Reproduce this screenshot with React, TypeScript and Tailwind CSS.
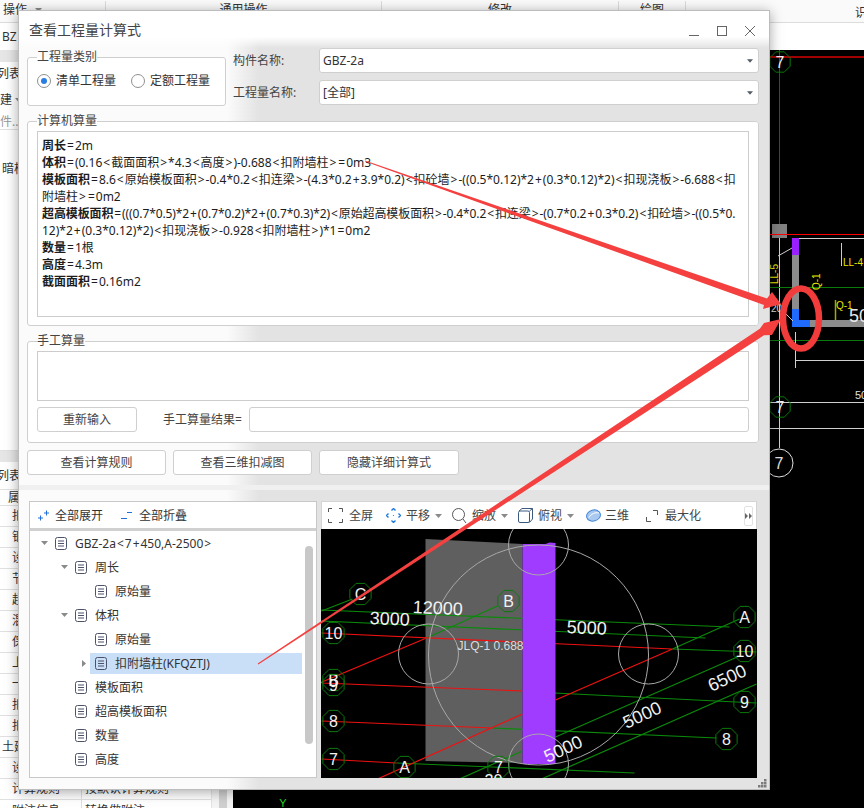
import React from "react";

const FONT = "[font-family:'Noto_Sans','Noto_Sans_CJK_SC',sans-serif]";

const calcLines = [
  { label: "周长", text: "=2m", cls: "" },
  { label: "体积", text: "=(0.16<截面面积>*4.3<高度>)-0.688<扣附墙柱>=0m3", cls: "" },
  {
    label: "模板面积",
    text: "=8.6<原始模板面积>-0.4*0.2<扣连梁>-(4.3*0.2+3.9*0.2)<扣砼墙>-((0.5*0.12)*2+(0.3*0.12)*2)<扣现浇板>-6.688<扣",
    cls: "",
  },
  { label: "", text: "附墙柱>=0m2", cls: "" },
  {
    label: "超高模板面积",
    text: "=(((0.7*0.5)*2+(0.7*0.2)*2+(0.7*0.3)*2)<原始超高模板面积>-0.4*0.2<扣连梁>-(0.7*0.2+0.3*0.2)<扣砼墙>-((0.5*0.",
    cls: "tracking-[-0.11px]",
  },
  { label: "", text: "12)*2+(0.3*0.12)*2)<扣现浇板>-0.928<扣附墙柱>)*1=0m2", cls: "" },
  { label: "数量", text: "=1根", cls: "" },
  { label: "高度", text: "=4.3m", cls: "" },
  { label: "截面面积", text: "=0.16m2", cls: "" },
];

const treeRows = [
  { name: "GBZ-2a<7+450,A-2500>", pad: "pl-[8px]", caret: "down" },
  { name: "周长", pad: "pl-[28px]", caret: "down" },
  { name: "原始量", pad: "pl-[48px]", caret: "" },
  { name: "体积", pad: "pl-[28px]", caret: "down" },
  { name: "原始量", pad: "pl-[48px]", caret: "" },
  { name: "扣附墙柱(KFQZTJ)", pad: "pl-[48px]", caret: "right", selected: true },
  { name: "模板面积", pad: "pl-[28px]", caret: "" },
  { name: "超高模板面积", pad: "pl-[28px]", caret: "" },
  { name: "数量", pad: "pl-[28px]", caret: "" },
  { name: "高度", pad: "pl-[28px]", caret: "" },
  { name: "截面面积", pad: "pl-[28px]", caret: "" },
];

const sideRows = ["扣", "钢", "设", "节", "超", "混", "保", "上", "一", "扣", "扣", "土建", "设"];

// the operators sit wider in the original font than in Noto Sans
function Formula({ text }: { text: string }) {
  return (
    <>
      {text.split(/([<>=+])/).map((part, i) =>
        /^[<>=+]$/.test(part) ? (
          <span key={i} className="mx-[1px]">
            {part}
          </span>
        ) : (
          part
        ),
      )}
    </>
  );
}

function Caret({ dark }: { dark?: boolean }) {
  return (
    <svg width={dark ? 6 : 7} height="4" viewBox="0 0 7 4" className="shrink-0">
      <path d="M0 0h7L3.5 4z" fill={dark ? "#555a66" : "#8a8a8a"} />
    </svg>
  );
}

function DocIcon() {
  return (
    <svg width="12" height="13" viewBox="0 0 12 13" className="shrink-0" fill="none" stroke="#4c5268">
      <rect x="0.5" y="0.5" width="11" height="12" rx="2" />
      <path d="M3 4h6M3 6.5h6M3 9h6" />
    </svg>
  );
}

function Field({ label, value }: { label: string; value: string }) {
  return (
    <div className="flex h-[25px] items-center">
      <span className="w-[86px] pt-[1px] text-[12px] text-[#444]">{label}</span>
      <div className="flex h-full flex-1 items-center justify-between rounded-[3px] border border-[#cfcfcf] bg-white pl-[3px] pr-[5px] pt-[1px] text-[12px] text-[#333]">
        <span>{value}</span>
        <Caret dark />
      </div>
    </div>
  );
}

function Radio({ label, checked }: { label: string; checked?: boolean }) {
  return (
    <div className="flex items-center gap-[5px] text-[12px] text-[#333]">
      <span className="flex h-[14px] w-[14px] items-center justify-center rounded-full border border-[#8f8f8f] bg-white">
        {checked && <span className="h-[6px] w-[6px] rounded-full bg-[#2a7de1]" />}
      </span>
      {label}
    </div>
  );
}

function ActionButton({ label, width }: { label: string; width: string }) {
  return (
    <button className={`h-[25px] rounded-[3px] border border-[#cfcfcf] bg-white text-[12px] text-[#444] ${width}`}>
      {label}
    </button>
  );
}

function Octagon({ x, y, label, r = 11.5 }: { x: number; y: number; label: string; r?: number }) {
  const pts = Array.from({ length: 8 }, (_, i) => {
    const a = (Math.PI / 4) * i + Math.PI / 8;
    return `${x + r * Math.cos(a)},${y + r * Math.sin(a)}`;
  }).join(" ");
  return (
    <g>
      <polygon points={pts} fill="none" stroke="#0b7a0b" strokeWidth="1" />
      <text x={x} y={y + 6} textAnchor="middle" fontSize="16" fill="#f2f2f2" fontFamily="'Liberation Sans',sans-serif">
        {label}
      </text>
    </g>
  );
}

function ThreeDView() {
  const green = "#0a8a0a";
  const red = "#f01010";
  const text = "'Liberation Sans',sans-serif";
  return (
    <svg viewBox="322 528 435 249" className="block h-[249px] w-full bg-black">
      <polygon points="426,538 523,543 523,762 426,760" fill="#5f5f5f" />
      <g fill="none" strokeWidth="1.2">
        <path d="M322 609L730 626M322 620L706 637M673 648L757 651M555 692L757 702M493 727L717 737M397 762L635 772" stroke={green} />
        <path d="M322 610L353 598M427 637L498 605M460 778L523 750M740 618L673 648M740 655L556 736M542 778L757 683" stroke={green} />
        <path d="M322 632L673 648M322 682L523 690M322 720L493 727M322 758L397 762M320 682L427 637M556 699L673 648M378 778L523 713" stroke={red} />
      </g>
      <path d="M523 543L546 543L550 541.5L556 542V763L523 763z" fill="#a03cff" />
      <g fill="none" stroke="#a8a8a8" strokeWidth="1">
        <circle cx="539" cy="654" r="110" />
        <circle cx="539" cy="544" r="30" />
        <circle cx="429" cy="653" r="30" />
        <circle cx="649" cy="653" r="30" />
        <circle cx="539" cy="763" r="30" />
      </g>
      <Octagon x={361} y={593} label="C" />
      <Octagon x={509} y={600} label="B" />
      <Octagon x={745} y={616} label="A" />
      <Octagon x={334} y={632} label="10" />
      <Octagon x={745} y={650} label="10" />
      <Octagon x={334} y={679} label="B" />
      <Octagon x={334} y={684} label="9" />
      <Octagon x={745} y={701} label="9" />
      <Octagon x={334} y={720} label="8" />
      <Octagon x={727} y={738} label="8" />
      <Octagon x={334} y={758} label="7" />
      <Octagon x={405} y={766} label="A" />
      <Octagon x={499} y={766} label="7" />
      <g fill="#f2f2f2" fontSize="18" fontFamily={text}>
        <text x="413" y="612" transform="rotate(2.5 413 612)">12000</text>
        <text x="370" y="623" transform="rotate(2.5 370 623)">3000</text>
        <text x="567" y="632" transform="rotate(2.5 567 632)">5000</text>
        <text x="712" y="691" transform="rotate(-25 712 691)">6500</text>
        <text x="627" y="728" transform="rotate(-25 627 728)">5000</text>
        <text x="548" y="762" transform="rotate(-25 548 762)">5000</text>
        <text x="485" y="785" fontSize="16">20</text>
      </g>
      <text x="458" y="649" fontSize="12" fill="#dddddd" fontFamily={text}>JLQ-1 0.688</text>
    </svg>
  );
}

function TopCad() {
  const text = "'Liberation Sans',sans-serif";
  return (
    <svg viewBox="233 50 631 758" className="block h-[758px] w-[631px]">
      <path d="M770 57H864" stroke="#a00000" strokeWidth="2" />
      <path d="M779.5 50V234" stroke="#c01010" strokeWidth="1" />
      <rect x="772" y="224" width="15" height="14" fill="#808080" />
      <path d="M770 234.5H864" stroke="#ff0000" strokeWidth="1" />
      <path d="M779.5 238V448" stroke="#d0d0d0" strokeWidth="1" />
      <path d="M792 238.5H864" stroke="#d0d0d0" strokeWidth="1" />
      <path d="M770 287.5H864M770 340.5H864" stroke="#0a7a0a" strokeWidth="1" />
      <rect x="792" y="238" width="7" height="89" fill="#8c8c8c" />
      <rect x="799" y="320" width="65" height="7" fill="#8c8c8c" />
      <rect x="792" y="238" width="7" height="17" fill="#9a20ff" />
      <rect x="792" y="309" width="7" height="18" fill="#1f6bff" />
      <rect x="792" y="320" width="18" height="7" fill="#1f6bff" />
      <path d="M778 256L792 248M785 313L793 321" stroke="#d0d0d0" strokeWidth="1" fill="none" />
      <path d="M841.5 243V266" stroke="#e6e600" />
      <path d="M835.5 300V320" stroke="#a8a800" strokeWidth="1.5" />
      <g fill="#e6e600" fontSize="10" fontFamily={text}>
        <text x="843" y="266">LL-4</text>
        <text x="836" y="309">Q-1</text>
        <text x="778" y="284" transform="rotate(-90 778 284)">LL-5</text>
        <text x="820" y="290" transform="rotate(-90 820 290)">Q-1</text>
      </g>
      <path d="M795.5 332V368M795 360.5H864M770 402.5H864M770 428.5H864" stroke="#d0d0d0" strokeWidth="1" />
      <text x="771" y="312" fontSize="10" fill="#e0e0e0" fontFamily={text}>20</text>
      <text x="849" y="322" fontSize="18" fill="#e8e8e8" fontFamily={text}>50</text>
      <text x="855" y="399" fontSize="11" fill="#e0e0e0" fontFamily={text}>50</text>
      <Octagon x={780} y={62} label="7" r={11} />
      <Octagon x={780} y={407} label="7" r={11} />
      <circle cx="779" cy="463" r="14" fill="#000" stroke="#e0e0e0" strokeWidth="1" />
      <text x="779" y="469" textAnchor="middle" fontSize="16" fill="#e0e0e0" fontFamily={text}>7</text>
      <text x="283" y="807" textAnchor="middle" fontSize="11" fill="#22dd22" fontFamily={text}>Y</text>
    </svg>
  );
}

function AppBackground() {
  return (
    <div className="flex h-[808px] w-[864px] flex-col bg-white text-[12px] text-[#333]">
      <div className="flex h-[23px] shrink-0 border-b border-[#dcdcdc] bg-[#fafafa] pt-[1px]">
        <div className="flex w-[106px] items-start gap-[8px] overflow-hidden border-r border-[#dcdcdc] pl-[3px]">
          <span>操作</span>
          <span className="pt-[7px]"><Caret /></span>
        </div>
        <div className="flex w-[276px] items-start justify-center border-r border-[#dcdcdc]">通用操作</div>
        <div className="flex w-[237px] items-start justify-center border-r border-[#dcdcdc]">修改</div>
        <div className="flex w-[67px] items-start justify-center border-r border-[#dcdcdc]">绘图</div>
        <div className="flex-1 overflow-hidden whitespace-nowrap pl-[169px] pt-[3px]">识别</div>
      </div>
      <div className="flex h-[27px] shrink-0 items-center bg-white pl-[2px] text-[#333]">
        <span>BZ</span>
      </div>
      <div className="flex min-h-0 flex-1">
        <div className="flex w-[212px] shrink-0 flex-col border-r border-[#e4e4e4]">
          <div className="h-[12px] shrink-0 bg-[#e6e6e6]" />
          <div className="-ml-[3px] flex h-[24px] shrink-0 items-center">列表</div>
          <div className="flex h-[28px] shrink-0 items-center gap-[3px]">
            建 <Caret />
          </div>
          <div className="flex h-[16px] shrink-0 items-center border-b border-[#e0e0e0] text-[#999]">件...</div>
          <div className="flex h-[48px] shrink-0 items-end pl-[2px]">暗柱</div>
          <div className="h-[273px] shrink-0 border-b border-[#e0e0e0]" />
          <div className="h-[11px] shrink-0 bg-[#e6e6e6]" />
          <div className="-ml-[3px] flex h-[28px] shrink-0 items-center border-b border-[#e0e0e0]">列表</div>
          <div className="flex h-[16px] shrink-0 items-center border-b border-[#e0e0e0] pl-[8px]">属</div>
          {sideRows.map((row, i) => (
            <div
              key={i}
              className={`flex h-[21px] shrink-0 items-center border-b border-[#e0e0e0] ${row === "土建" ? "pl-[2px]" : "pl-[12px]"}`}
            >
              {row}
            </div>
          ))}
          <div className="flex h-[21px] shrink-0 items-center border-b border-[#e0e0e0] pl-[12px]">
            <span className="flex h-full w-[70px] items-center border-r border-[#e0e0e0]">计算规则</span>
            <span className="pl-[3px]">按默认计算规则</span>
          </div>
          <div className="flex h-[21px] shrink-0 items-center pl-[12px]">
            <span className="flex h-full w-[70px] items-center border-r border-[#e0e0e0]">附注信息</span>
            <span className="pl-[3px]">转换做附注</span>
          </div>
        </div>
        <div className="flex w-[21px] shrink-0 justify-center bg-[#f4f4f4]">
          <div className="h-full w-[8px] bg-[#cfcfcf]" />
        </div>
        <div className="min-w-0 flex-1 overflow-hidden bg-black">
          <TopCad />
        </div>
      </div>
    </div>
  );
}

function TreePanel() {
  return (
    <div className="flex w-[288px] shrink-0 flex-col border border-[#c8c8c8] bg-white">
      <div className="flex h-[29px] shrink-0 items-center border-b-[3px] border-[#d0d0d0] pt-[1px] text-[12px] text-[#333]">
        <svg width="11" height="11" viewBox="0 0 11 11" className="ml-[8px]" stroke="#1f6fd6" fill="none">
          <path d="M0 8h5M2.5 5.5v5M6 3h5M8.5 0.5v5" />
        </svg>
        <span className="ml-[6px]">全部展开</span>
        <svg width="11" height="9" viewBox="0 0 11 9" className="ml-[18px]" stroke="#1f6fd6" fill="none">
          <path d="M0 7.5h6M6 1.5h5" />
        </svg>
        <span className="ml-[7px]">全部折叠</span>
      </div>
      <div className="flex min-h-0 flex-1">
        <div className="min-w-0 flex-1 overflow-hidden">
          {treeRows.map((row, i) => (
            <div key={i} className={`flex h-[24px] items-center ${row.pad}`}>
              <span className="flex w-[12px] shrink-0 justify-center">
                {row.caret === "down" && <Caret />}
                {row.caret === "right" && (
                  <svg width="4" height="7" viewBox="0 0 4 7">
                    <path d="M0 0l4 3.5L0 7z" fill="#8a8a8a" />
                  </svg>
                )}
              </span>
              <span
                className={`flex h-[21px] flex-1 items-center gap-[8px] whitespace-nowrap pl-[5px] text-[12px] text-[#333] ${
                  row.selected ? "bg-[#c9dff7]" : ""
                }`}
              >
                <DocIcon />
                <span className="pt-[1px]">
                  <Formula text={row.name} />
                </span>
              </span>
            </div>
          ))}
        </div>
        <div className="ml-[3px] mr-[3px] mt-[15px] h-[198px] w-[8px] shrink-0 rounded-full bg-[#c8c8c8]" />
      </div>
    </div>
  );
}

function ViewToolbar() {
  return (
    <div className="flex h-[28px] shrink-0 items-center border border-b-0 border-[#d4d4d4] bg-white text-[12px] text-[#444]">
      <svg width="15" height="15" viewBox="0 0 15 15" fill="none" stroke="#555" className="ml-[6px]">
        <path d="M0.5 4V0.5H4M11 0.5H14.5V4M14.5 11V14.5H11M4 14.5H0.5V11" />
      </svg>
      <span className="ml-[6px]">全屏</span>
      <svg width="15" height="15" viewBox="0 0 15 15" fill="none" stroke="#1f7ae0" strokeWidth="1.4" className="ml-[13px]">
        <path d="M5.5 2.5l2-2 2 2M5.5 12.5l2 2 2-2M2.5 5.5l-2 2 2 2M12.5 5.5l2 2-2 2" />
        <circle cx="7.5" cy="7.5" r="0.6" fill="#1f7ae0" stroke="none" />
      </svg>
      <span className="ml-[5px]">平移</span>
      <span className="ml-[5px]"><Caret /></span>
      <svg width="15" height="16" viewBox="0 0 15 16" fill="none" stroke="#555" className="ml-[10px]">
        <circle cx="6.5" cy="6.5" r="6" />
        <path d="M11 11l3 4" />
      </svg>
      <span className="ml-[5px]">缩放</span>
      <span className="ml-[5px]"><Caret /></span>
      <svg width="15" height="15" viewBox="0 0 15 15" fill="none" stroke="#3c5a80" className="ml-[10px]">
        <rect x="0.5" y="3" width="11" height="11.5" rx="1.5" />
        <path d="M1 3l3-2.5h10.5V11l-3 3.5M11.5 3l3-2.5" />
      </svg>
      <span className="ml-[5px]">俯视</span>
      <span className="ml-[5px]"><Caret /></span>
      <svg width="15" height="13" viewBox="0 0 15 13" className="ml-[12px]">
        <ellipse cx="7.5" cy="6.5" rx="7" ry="5.5" fill="#a9c9f0" stroke="#3f86d8" transform="rotate(-15 7.5 6.5)" />
        <path d="M3 8.5C5 5 9 3 13 4" fill="none" stroke="#fff" />
      </svg>
      <span className="ml-[4px]">三维</span>
      <svg width="12" height="12" viewBox="0 0 12 12" fill="none" stroke="#555" className="ml-[17px]">
        <path d="M0.5 7v4.5H5M7 0.5h4.5V5" />
      </svg>
      <span className="ml-[7px]">最大化</span>
      <span className="ml-auto mr-[3px] flex h-[20px] w-[9px] items-center justify-center rounded-[2px] border border-[#e2e2e2]">
        <svg width="7" height="6" viewBox="0 0 7 6">
          <path d="M0 0l3 3-3 3zM4 0l3 3-3 3z" fill="#666" />
        </svg>
      </span>
    </div>
  );
}

function Dialog() {
  return (
    <div className="absolute left-[18px] top-[10px] flex h-[780px] w-[752px] flex-col border border-[#bdbdbd] bg-[linear-gradient(90deg,#fbfbfb_0,#fbfbfb_208px,#e3e3e3_240px)] shadow-[0_2px_12px_rgba(0,0,0,0.35)]">
      <div className="flex h-[37px] shrink-0 items-center justify-between bg-[linear-gradient(180deg,#ffffff_70%,rgba(255,255,255,0))] pb-[1px] pl-[10px] pr-[14px] text-[14px] text-[#444]">
        <span>查看工程量计算式</span>
        <div className="flex items-center gap-[18px] pt-[3px]">
          <svg width="10" height="10" viewBox="0 0 10 10" stroke="#666" fill="none">
            <path d="M0 9.5h10" />
          </svg>
          <svg width="10" height="10" viewBox="0 0 10 10" stroke="#666" fill="none">
            <rect x="0.5" y="0.5" width="9" height="9" />
          </svg>
          <svg width="10" height="10" viewBox="0 0 10 10" stroke="#666" fill="none">
            <path d="M0 0l10 10M10 0L0 10" />
          </svg>
        </div>
      </div>

      <div className="flex shrink-0 gap-[7px] pl-[8px] pr-[10px]">
        <fieldset className="mt-[2px] h-[56px] w-[199px] shrink-0 rounded-[3px] border border-[#cfcfcf] bg-white pl-[9px]">
          <legend className="text-[12px] leading-[14px] text-[#444]">工程量类别</legend>
          <div className="flex gap-[15px] pt-[8px]">
            <Radio label="清单工程量" checked />
            <Radio label="定额工程量" />
          </div>
        </fieldset>
        <div className="flex flex-1 flex-col gap-[7px]">
          <Field label="构件名称:" value="GBZ-2a" />
          <Field label="工程量名称:" value="[全部]" />
        </div>
      </div>

      <fieldset className="mx-[8px] mr-[10px] mt-[8px] h-[212px] shrink-0 rounded-[3px] border border-[#cfcfcf] bg-white px-[9px] pb-[9px]">
        <legend className="text-[12px] leading-[14px] text-[#444]">计算机算量</legend>
        <div className="mt-[3px] h-[186px] overflow-hidden border border-[#cccccc] bg-white pl-[4px] pt-[5px] text-[12px] leading-[17px] text-[#1c1c1c]">
          {calcLines.map((line, i) => (
            <div key={i} className={`whitespace-nowrap ${line.cls}`}>
              {line.label && <b className="font-bold">{line.label}</b>}
              <Formula text={line.text} />
            </div>
          ))}
        </div>
      </fieldset>

      <fieldset className="mx-[8px] mr-[10px] mt-[8px] h-[109px] shrink-0 rounded-[3px] border border-[#cfcfcf] bg-white px-[9px]">
        <legend className="text-[12px] leading-[14px] text-[#444]">手工算量</legend>
        <div className="mt-[3px] h-[50px] border border-[#cccccc] bg-white" />
        <div className="mt-[6px] flex items-center">
          <ActionButton label="重新输入" width="w-[100px]" />
          <span className="ml-[26px] w-[86px] text-[12px] text-[#444]">手工算量结果=</span>
          <div className="h-[25px] flex-1 rounded-[3px] border border-[#cfcfcf] bg-white" />
        </div>
      </fieldset>

      <div className="ml-[8px] mt-[7px] flex shrink-0 gap-[7px]">
        <ActionButton label="查看计算规则" width="w-[139px]" />
        <ActionButton label="查看三维扣减图" width="w-[139px]" />
        <ActionButton label="隐藏详细计算式" width="w-[140px]" />
      </div>

      <div className="mt-[10px] h-[5px] shrink-0 bg-[#f0f0f0]" />

      <div className="ml-[10px] mr-[12px] mt-[11px] flex h-[277px] shrink-0 gap-[4px]">
        <TreePanel />
        <div className="flex min-w-0 flex-1 flex-col">
          <ViewToolbar />
          <ThreeDView />
        </div>
      </div>

      <div className="flex flex-1 items-center justify-end pr-[2px]">
        <svg width="9" height="9" viewBox="0 0 9 9" fill="#7c7c7c">
          <path d="M6 0h2.5v2.5H6zM3 3h2.5v2.5H3zM6 3h2.5v2.5H6zM0 6h2.5v2.5H0zM3 6h2.5v2.5H3zM6 6h2.5v2.5H6z" />
        </svg>
      </div>
    </div>
  );
}

function Annotations() {
  return (
    <svg viewBox="0 0 864 808" className="pointer-events-none absolute inset-0 h-[808px] w-[864px]">
      <polygon points="365,160.5 767,298.5 772,292 781,304 763,309 764,305 365,161.5" fill="#f4403f" />
      <polygon points="257.7,663.6 759.8,328.7 764,323 781,319 772,335 764,335.3 258.3,664.4" fill="#f4403f" />
      <ellipse cx="801" cy="318.5" rx="18" ry="30" fill="none" stroke="#f23c3c" strokeWidth="6.5" />
    </svg>
  );
}

export default function App() {
  return (
    <div className={`relative h-[808px] w-[864px] overflow-hidden ${FONT}`}>
      <AppBackground />
      <Dialog />
      <Annotations />
    </div>
  );
}
